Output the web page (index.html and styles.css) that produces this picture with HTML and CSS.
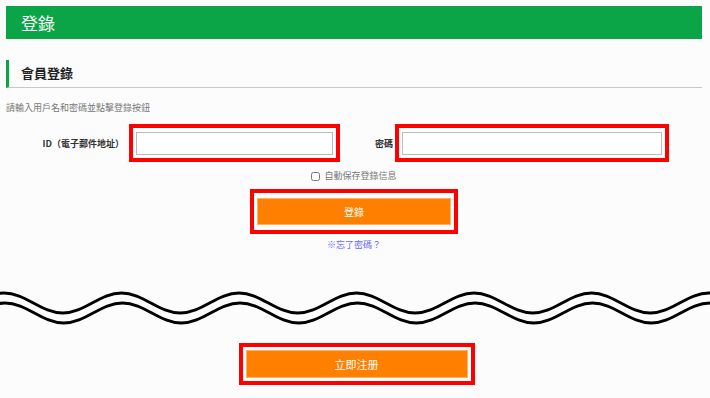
FILE: index.html
```html
<!DOCTYPE html>
<html lang="zh-Hant">
<head>
    <meta charset="UTF-8">
    <meta name="viewport" content="width=device-width, initial-scale=1.0">
    <title>登錄</title>
    <link rel="stylesheet" href="styles.css">
</head>

<body>
    <div class="page">
        <header class="title-bar">登錄</header>

        <h2 class="section-title">會員登錄</h2>

        <p class="hint">請輸入用戶名和密碼並點擊登錄按鈕</p>

        <form class="login-form" onsubmit="return false">
            <div class="field-row">
                <label class="label label-id" for="userId">ID（電子郵件地址）</label>
                <span class="mark mark-id"><input type="text" id="userId" class="text-input"></span>
                <label class="label label-pw" for="userPw">密碼</label>
                <span class="mark mark-pw"><input type="password" id="userPw" class="text-input"></span>
            </div>

            <div class="remember">
                <input type="checkbox" id="remember" class="check">
                <label for="remember">自動保存登錄信息</label>
            </div>

            <div class="center">
                <span class="mark mark-login"><button class="btn btn-login">登錄</button></span>
            </div>

            <div class="center">
                <a href="#" class="forgot">※忘了密碼？</a>
            </div>
        </form>

        <!-- page break -->
        <svg class="wave" width="710" height="40" viewBox="0 0 710 40">
            <g fill="none" stroke="#000" stroke-width="3">
                <path id="waveLine" d="M-54.75 25 C-33.4 25 -17.35 5 4 5 S41.4 25 62.75 25 S100.15 5 121.5 5 S158.9 25 180.25 25 S217.65 5 239 5 S276.4 25 297.75 25 S335.15 5 356.5 5 S393.9 25 415.25 25 S452.65 5 474 5 S511.4 25 532.75 25 S570.15 5 591.5 5 S628.9 25 650.25 25 S687.65 5 709 5 S746.4 25 767.75 25"/>
                <use href="#waveLine" transform="translate(1 10)"/>
            </g>
        </svg>

        <div class="center register">
            <span class="mark mark-register"><button class="btn btn-register">立即注册</button></span>
        </div>
    </div>
</body>
</html>
```

FILE: styles.css
```css
* {
    margin: 0;
    padding: 0;
    box-sizing: border-box;
}

body {
    background-color: #fcfcfc;
    font-family: "Noto Sans CJK TC", "Noto Sans", sans-serif;
    color: #333;
    overflow: hidden;
}

.page {
    margin: 6px 8px 0 6px;
}

.title-bar {
    height: 33px;
    background-color: #0ba548;
    color: #fff;
    font-size: 17px;
    line-height: 33px;
    padding-left: 15px;
}

.section-title {
    margin-top: 21px;
    height: 28px;
    border-left: 3px solid #0ba548;
    border-bottom: 1px solid #c8c8c8;
    padding-left: 12px;
    font-size: 13px;
    font-weight: bold;
    line-height: 26px;
    color: #222;
}

.hint {
    margin-top: 14px;
    font-size: 9px;
    line-height: 12px;
    color: #777;
}

.field-row {
    margin-top: 10px;
    display: flex;
    align-items: center;
}

.label {
    font-size: 9px;
    font-weight: bold;
    color: #333;
    text-align: right;
}

.label-id {
    width: 118px;
    margin-right: 5px;
}

.label-pw {
    width: 53px;
    margin-right: 2px;
}

/* red highlight frames */
.mark {
    display: inline-block;
    border: 4px solid #ff0000;
    background-color: #fff;
}

.mark-id,
.mark-pw {
    padding: 4px 3px 3px 3px;
}

.mark-id .text-input {
    width: 197px;
}

.mark-pw .text-input {
    width: 260px;
}

.text-input {
    display: block;
    height: 23px;
    border: 1px solid #bbb;
    background-color: #fff;
    outline: none;
}

.remember {
    margin-top: 7px;
    display: flex;
    justify-content: center;
    align-items: center;
    font-size: 9px;
    line-height: 14px;
    color: #777;
}

.check {
    width: 9px;
    height: 9px;
    margin-right: 4px;
}

.center {
    display: flex;
    justify-content: center;
}

.mark-login {
    margin-top: 6px;
    padding: 5px 3px;
}

.btn {
    display: block;
    border: 1px solid #ffb060;
    background-color: #ff8000;
    color: #fff;
    font-family: "Noto Sans CJK TC", "Noto Sans", sans-serif;
    font-size: 10px;
}

.btn-login {
    width: 194px;
    height: 27px;
}

.forgot {
    margin-top: 5px;
    font-size: 9px;
    line-height: 12px;
    color: #6666ff;
    text-decoration: none;
}

.wave {
    display: block;
    margin: 37px 0 0 -6px;
}

.register {
    margin-top: 15px;
    padding-left: 5px;
}

.mark-register {
    padding: 3px;
}

.btn-register {
    width: 222px;
    height: 28px;
    font-size: 11px;
}
```
